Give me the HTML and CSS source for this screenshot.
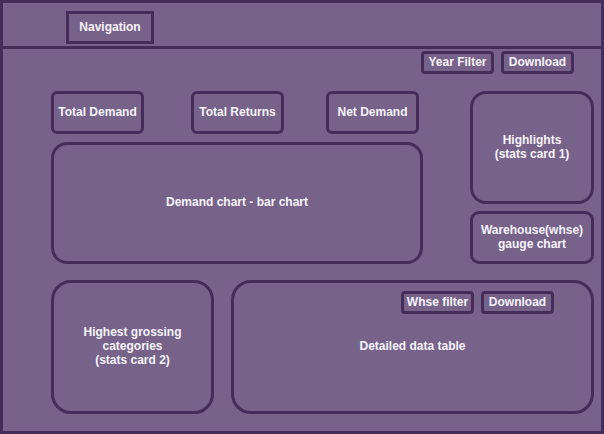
FILE: index.html
```html
<!DOCTYPE html>
<html lang="en">
<head>
<meta charset="utf-8">
<title>Dashboard wireframe</title>
<link rel="stylesheet" href="styles.css">
</head>
<body>
<div class="app">
  <header class="header">
    <div class="nav-box">Navigation</div>
  </header>
  <main class="main">
    <div class="toolbar">
      <div class="btn">Year Filter</div>
      <div class="btn">Download</div>
    </div>
    <div class="middle">
      <div class="left-col">
        <div class="kpis">
          <div class="box kpi">Total Demand</div>
          <div class="box kpi kpi-returns">Total Returns</div>
          <div class="box kpi kpi-net">Net Demand</div>
        </div>
        <div class="box chart">Demand chart - bar chart</div>
      </div>
      <div class="right-col">
        <div class="box highlights">Highlights<br>(stats card 1)</div>
        <div class="box gauge">Warehouse(whse)<br>gauge chart</div>
      </div>
    </div>
    <div class="bottom">
      <div class="box categories">Highest grossing<br>categories<br>(stats card 2)</div>
      <div class="table-card">
        <div class="table-tools">
          <div class="btn">Whse filter</div>
          <div class="btn">Download</div>
        </div>
        <div class="table-label">Detailed data table</div>
      </div>
    </div>
  </main>
</div>
</body>
</html>
```

FILE: styles.css
```css
* { box-sizing: border-box; }

html, body {
  margin: 0;
  padding: 0;
  background: #77628a;
}

body {
  font-family: "Liberation Sans", Arial, sans-serif;
  font-size: 12px;
  font-weight: bold;
  line-height: 14px;
  color: #f7f3fa;
}

.app {
  width: 604px;
  height: 434px;
  border: 3px solid #452d59;
  background: #77628a;
  display: flex;
  flex-direction: column;
}

.header {
  height: 46px;
  border-bottom: 3px solid #452d59;
  padding: 8px 0 0 63px;
  flex: none;
}

.nav-box {
  width: 88px;
  height: 33px;
  border: 3px solid #452d59;
  padding-bottom: 2px;
  display: flex;
  align-items: center;
  justify-content: center;
}

.main {
  padding: 2px 0 0 48px;
  display: flex;
  flex-direction: column;
}

.toolbar {
  display: flex;
  justify-content: flex-end;
  gap: 7px;
  padding-right: 27px;
}

.btn {
  width: 73px;
  height: 23px;
  border: 3px solid #452d59;
  border-radius: 4px;
  padding-bottom: 2px;
  display: flex;
  align-items: center;
  justify-content: center;
  white-space: nowrap;
}

.box {
  border: 3px solid #452d59;
  padding-bottom: 2px;
  display: flex;
  align-items: center;
  justify-content: center;
  text-align: center;
}

.middle {
  display: flex;
  margin-top: 17px;
  gap: 47px;
}

.left-col {
  width: 372px;
  display: flex;
  flex-direction: column;
}

.kpis {
  display: flex;
}

.kpi {
  width: 93px;
  height: 43px;
  border-radius: 6px;
}

.kpi-returns { margin-left: 47px; }
.kpi-net { margin-left: 42px; }

.chart {
  margin-top: 8px;
  height: 122px;
  border-radius: 16px;
}

.right-col {
  width: 124px;
  display: flex;
  flex-direction: column;
  gap: 7px;
}

.highlights {
  height: 113px;
  border-radius: 16px;
}

.gauge {
  height: 53px;
  border-radius: 9px;
}

.bottom {
  display: flex;
  margin-top: 16px;
  gap: 17px;
}

.categories {
  width: 163px;
  height: 134px;
  border-radius: 20px;
}

.table-card {
  width: 363px;
  height: 134px;
  border: 3px solid #452d59;
  border-radius: 20px;
  display: grid;
  grid-template-columns: 1fr;
  grid-template-rows: 1fr;
}

.table-tools {
  grid-area: 1 / 1;
  align-self: start;
  justify-self: end;
  display: flex;
  gap: 7px;
  margin: 8px 37px 0 0;
}

.table-label {
  grid-area: 1 / 1;
  align-self: center;
  justify-self: center;
  padding-bottom: 2px;
}
```
